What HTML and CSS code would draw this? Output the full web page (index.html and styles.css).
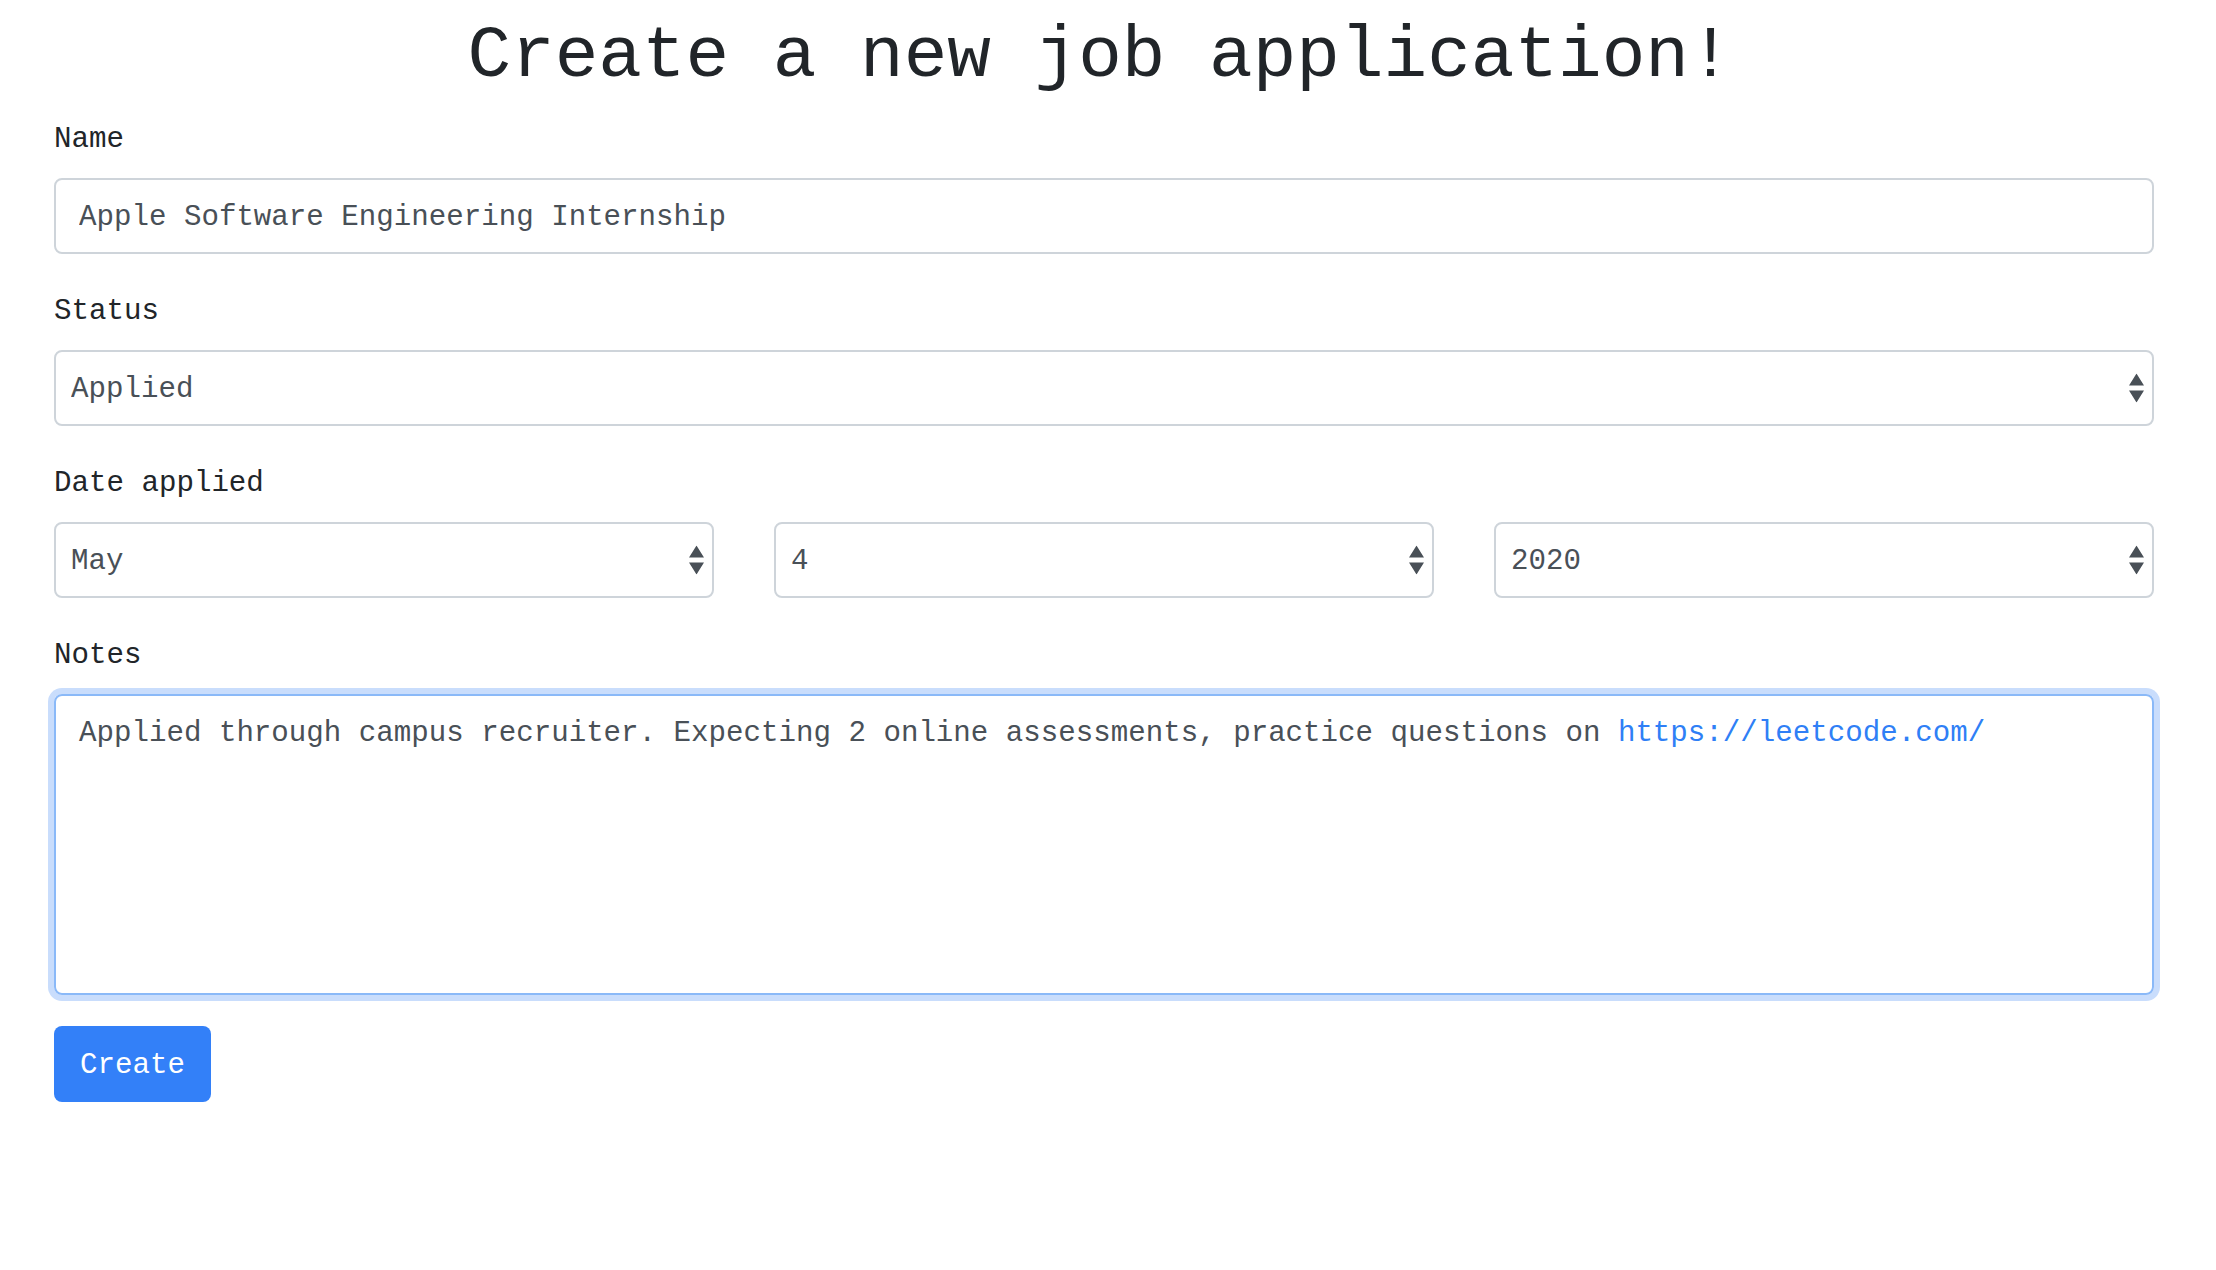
FILE: index.html
```html
<!DOCTYPE html>
<html lang="en">
<head>
<meta charset="utf-8">
<title>Create a new job application</title>
<link rel="stylesheet" href="styles.css">
</head>
<body>
<main class="container">
  <h1 class="title">Create a new job application!</h1>
  <form class="form">
    <div class="group">
      <label class="label" for="name">Name</label>
      <input class="control" id="name" type="text" value="Apple Software Engineering Internship">
    </div>
    <div class="group">
      <label class="label" for="status">Status</label>
      <div class="select-wrap">
        <select class="control select" id="status">
          <option selected>Applied</option>
          <option>Interviewing</option>
          <option>Offer</option>
          <option>Rejected</option>
        </select>
        <svg class="arrows" width="15" height="29" viewBox="0 0 15 29"><path d="M0 12 L7.5 0 L15 12 Z M0 17 L15 17 L7.5 29 Z"/></svg>
      </div>
    </div>
    <div class="group">
      <label class="label" for="month">Date applied</label>
      <div class="date-row">
        <div class="select-wrap">
          <select class="control select" id="month">
            <option>January</option><option>February</option><option>March</option><option>April</option>
            <option selected>May</option><option>June</option><option>July</option><option>August</option>
            <option>September</option><option>October</option><option>November</option><option>December</option>
          </select>
          <svg class="arrows" width="15" height="29" viewBox="0 0 15 29"><path d="M0 12 L7.5 0 L15 12 Z M0 17 L15 17 L7.5 29 Z"/></svg>
        </div>
        <div class="select-wrap">
          <select class="control select" id="day">
            <option>1</option><option>2</option><option>3</option><option selected>4</option><option>5</option>
            <option>6</option><option>7</option><option>8</option><option>9</option><option>10</option>
          </select>
          <svg class="arrows" width="15" height="29" viewBox="0 0 15 29"><path d="M0 12 L7.5 0 L15 12 Z M0 17 L15 17 L7.5 29 Z"/></svg>
        </div>
        <div class="select-wrap">
          <select class="control select" id="year">
            <option>2018</option><option>2019</option><option selected>2020</option><option>2021</option>
          </select>
          <svg class="arrows" width="15" height="29" viewBox="0 0 15 29"><path d="M0 12 L7.5 0 L15 12 Z M0 17 L15 17 L7.5 29 Z"/></svg>
        </div>
      </div>
    </div>
    <div class="group">
      <label class="label">Notes</label>
      <div class="notes" contenteditable="true">Applied through campus recruiter. Expecting 2 online assessments, practice questions on <a class="link" href="#">https://leetcode.com/</a></div>
    </div>
    <button class="btn" type="button">Create</button>
  </form>
</main>
</body>
</html>
```

FILE: styles.css
```css
* {
  box-sizing: border-box;
}

html, body {
  margin: 0;
  background: #ffffff;
}

body {
  font-family: "Liberation Mono", "DejaVu Sans Mono", monospace;
  color: #212529;
  padding-top: 13px;
}

.container {
  width: 2100px;
  margin-left: 54px;
}

.title {
  margin: 0 8px 17px 0;
  font-size: 72.7px;
  line-height: 88px;
  font-weight: 400;
  text-align: center;
  color: #212529;
}

.form {
  display: flex;
  flex-direction: column;
}

.group {
  margin-bottom: 36px;
}

.label {
  display: block;
  font-size: 29.15px;
  line-height: 44px;
  margin-bottom: 16px;
  color: #212529;
}

.control {
  display: block;
  width: 100%;
  height: 76px;
  border: 2px solid #ced4da;
  border-radius: 8px;
  background: #ffffff;
  font-family: "Liberation Mono", "DejaVu Sans Mono", monospace;
  font-size: 29.15px;
  color: #495057;
  padding: 2px 23px 0 23px;
  outline: none;
}

.select-wrap {
  position: relative;
}

.select {
  -webkit-appearance: none;
  appearance: none;
  padding: 2px 40px 0 15px;
}

.arrows {
  position: absolute;
  right: 10px;
  top: 50%;
  transform: translateY(-50%);
  fill: #495057;
  pointer-events: none;
}

.date-row {
  display: grid;
  grid-template-columns: repeat(3, 1fr);
  column-gap: 60px;
}

.notes {
  height: 301px;
  border: 2px solid #8ab9f8;
  border-radius: 8px;
  box-shadow: 0 0 0 6px #c9ddfc;
  padding: 16px 23px;
  font-size: 29.15px;
  line-height: 44px;
  color: #495057;
  outline: none;
  white-space: pre-wrap;
}

.link {
  color: #2f7ff6;
  text-decoration: none;
}

.btn {
  align-self: flex-start;
  margin-top: -5px;
  height: 76px;
  padding: 2px 26px 0 26px;
  border: none;
  border-radius: 8px;
  background: #3380f8;
  color: #ffffff;
  font-family: "Liberation Mono", "DejaVu Sans Mono", monospace;
  font-size: 29.15px;
}
```
